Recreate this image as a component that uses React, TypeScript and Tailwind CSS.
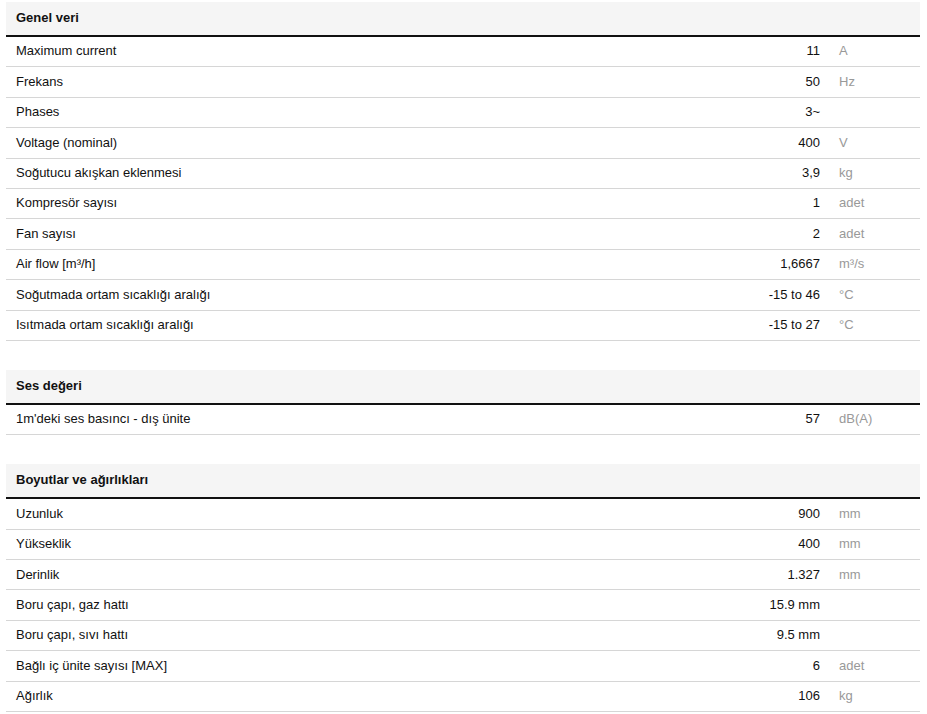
import React from 'react'

type Row = { label: string; value: string; unit?: string }

const sections: { title: string; rows: Row[] }[] = [
  {
    title: 'Genel veri',
    rows: [
      { label: 'Maximum current', value: '11', unit: 'A' },
      { label: 'Frekans', value: '50', unit: 'Hz' },
      { label: 'Phases', value: '3~' },
      { label: 'Voltage (nominal)', value: '400', unit: 'V' },
      { label: 'Soğutucu akışkan eklenmesi', value: '3,9', unit: 'kg' },
      { label: 'Kompresör sayısı', value: '1', unit: 'adet' },
      { label: 'Fan sayısı', value: '2', unit: 'adet' },
      { label: 'Air flow [m³/h]', value: '1,6667', unit: 'm³/s' },
      { label: 'Soğutmada ortam sıcaklığı aralığı', value: '-15 to 46', unit: '°C' },
      { label: 'Isıtmada ortam sıcaklığı aralığı', value: '-15 to 27', unit: '°C' },
    ],
  },
  {
    title: 'Ses değeri',
    rows: [{ label: "1m'deki ses basıncı - dış ünite", value: '57', unit: 'dB(A)' }],
  },
  {
    title: 'Boyutlar ve ağırlıkları',
    rows: [
      { label: 'Uzunluk', value: '900', unit: 'mm' },
      { label: 'Yükseklik', value: '400', unit: 'mm' },
      { label: 'Derinlik', value: '1.327', unit: 'mm' },
      { label: 'Boru çapı, gaz hattı', value: '15.9 mm' },
      { label: 'Boru çapı, sıvı hattı', value: '9.5 mm' },
      { label: 'Bağlı iç ünite sayısı [MAX]', value: '6', unit: 'adet' },
      { label: 'Ağırlık', value: '106', unit: 'kg' },
    ],
  },
]

export default function App() {
  return (
    <main
      className="min-h-screen bg-white px-[6px] pt-[2px] text-[13px] text-[#111]"
      style={{ fontFamily: '"Liberation Sans", Arial, sans-serif' }}
    >
      <div className="flex flex-col gap-[29px] w-[914px]">
        {sections.map(section => (
          <section key={section.title}>
            {/* Section header */}
            <div className="h-[35px] pb-[2px] bg-[#f5f5f5] border-b-2 border-[#111] flex items-center pl-[10px] font-bold">
              {section.title}
            </div>
            {section.rows.map(row => (
              <div
                key={row.label}
                className="h-[30.4px] pb-[1px] border-b border-[#d6d6d6] flex items-center"
              >
                <div className="flex-1 pl-[10px]">{row.label}</div>
                <div className="w-[200px] text-right">{row.value}</div>
                <div className="w-[100px] pl-[19px] text-[#999]">{row.unit}</div>
              </div>
            ))}
          </section>
        ))}
      </div>
    </main>
  )
}
